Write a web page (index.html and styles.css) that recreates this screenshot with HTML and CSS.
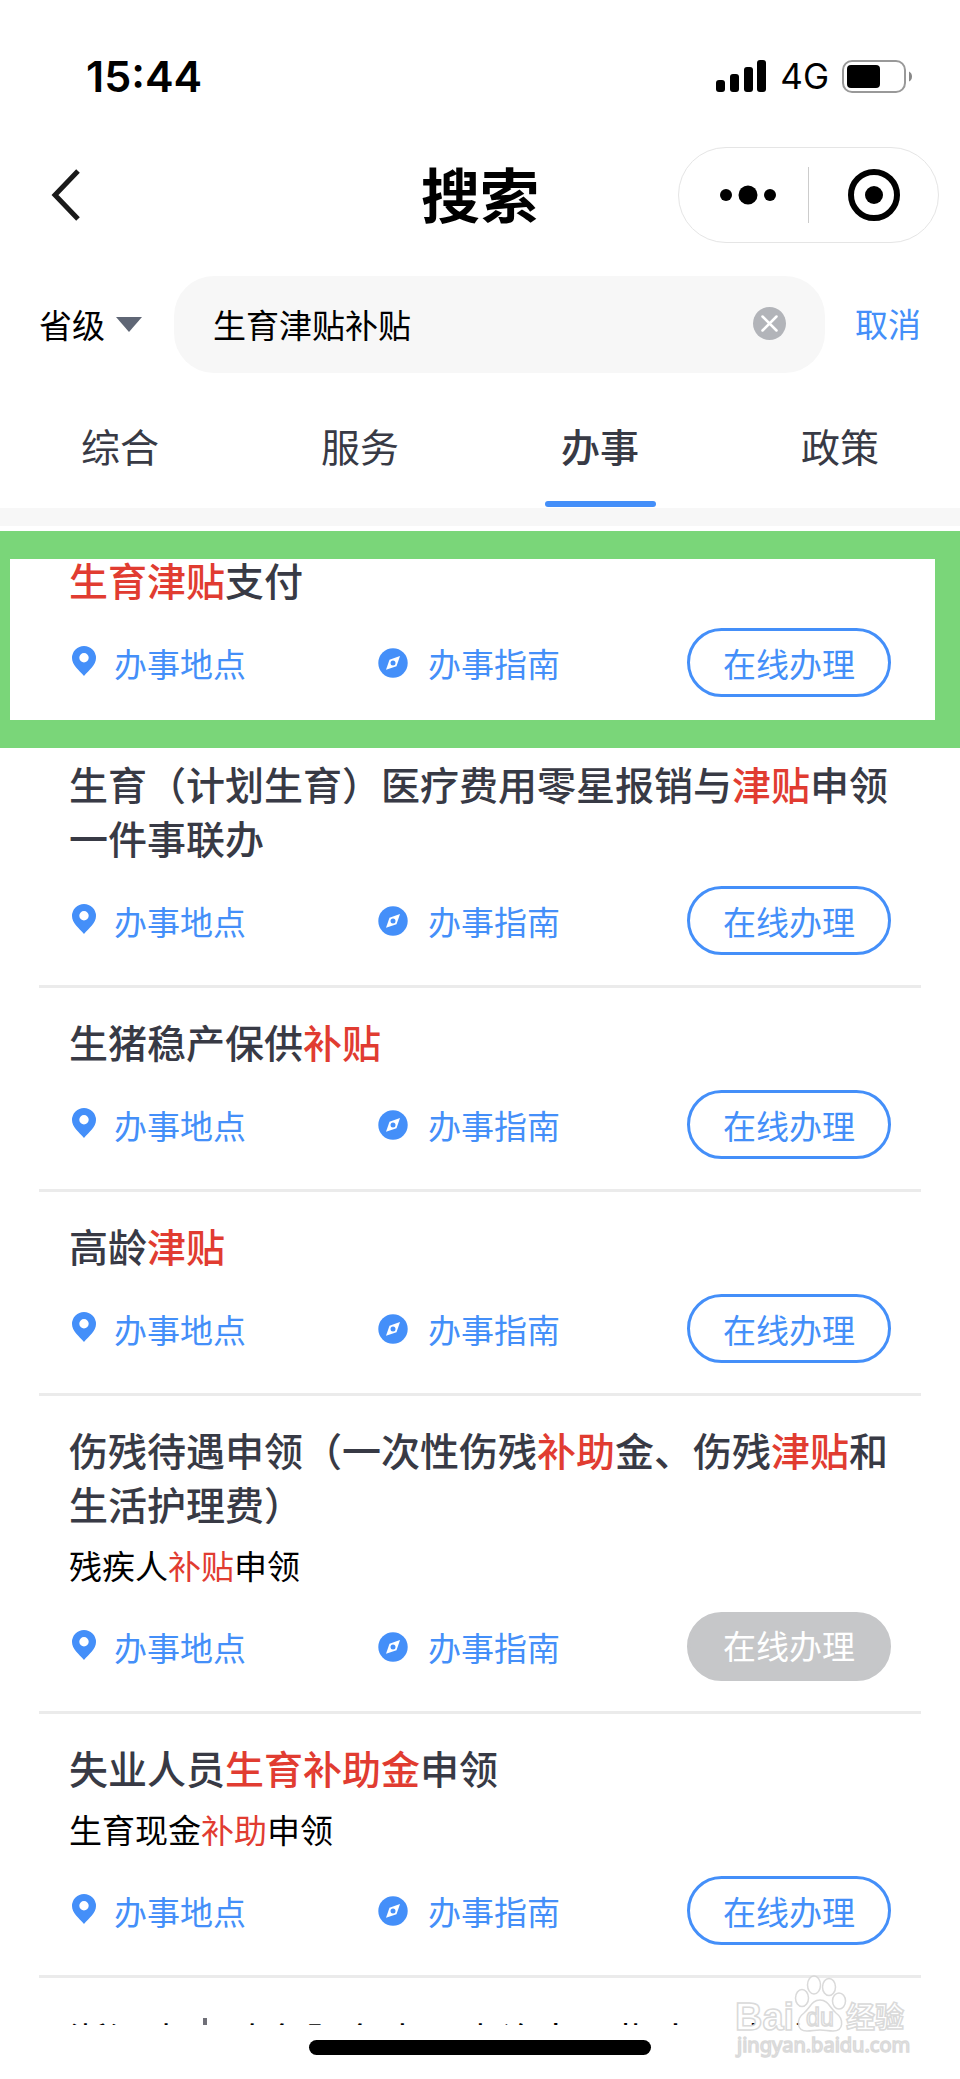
FILE: index.html
```html
<!DOCTYPE html>
<html lang="zh-CN">
<head>
<meta charset="utf-8">
<meta name="viewport" content="width=device-width, initial-scale=1">
<title>搜索</title>
<link rel="stylesheet" href="styles.css">
</head>
<body>
<svg class="sprite" aria-hidden="true">
  <symbol id="pin" viewBox="0 0 24 30"><path fill-rule="evenodd" d="M12 0a12 12 0 0 1 12 12c0 7-7 12-12 18C7 24 0 19 0 12A12 12 0 0 1 12 0zm0 7a4.700 4.700 0 1 0 0 9.400A4.700 4.700 0 0 0 12 7z"/></symbol>
  <symbol id="compass" viewBox="0 0 30 30"><circle cx="15" cy="15" r="14.700"/><path fill="#fff" d="M22 8l-10.500 3.700L8 21.800l10.500-3.500z"/><circle cx="15" cy="15" r="2.500"/></symbol>
</svg>
<div class="app">
  <div class="status">
    <span class="time">15:44</span>
    <div class="signals">
      <svg width="51" height="33" viewBox="0 0 51 33" aria-hidden="true"><rect x="0" y="20" width="9" height="12" rx="3"/><rect x="14" y="14" width="9" height="18" rx="3"/><rect x="28" y="7" width="9" height="25" rx="3"/><rect x="41" y="0" width="9" height="32" rx="3"/></svg>
      <span class="network">4G</span>
      <svg width="71" height="33" viewBox="0 0 71 33" aria-hidden="true"><rect x="1" y="1" width="62" height="31" rx="9" fill="none" stroke="#999" stroke-width="2"/><rect x="5" y="5" width="33" height="23" rx="4"/><path d="M67 11.500q3 1.500 3 5t-3 5z" fill="#888"/></svg>
    </div>
  </div>

  <header class="nav">
    <button class="back" aria-label="返回"><svg width="30" height="54" viewBox="0 0 30 54"><path d="M27 3L4 27l23 24" fill="none" stroke="#1a1a1a" stroke-width="5"/></svg></button>
    <h1 class="title">搜索</h1>
    <div class="capsule">
      <button class="capsule-btn more" aria-label="更多"><svg width="58" height="20" viewBox="0 0 58 20"><circle cx="7" cy="10" r="6"/><circle cx="29" cy="10" r="9.500"/><circle cx="51" cy="10" r="6"/></svg></button>
      <button class="capsule-btn" aria-label="关闭"><svg width="52" height="52" viewBox="0 0 52 52"><circle cx="26" cy="26" r="23" fill="none" stroke="#000" stroke-width="6"/><circle cx="26" cy="26" r="9"/></svg></button>
    </div>
  </header>

  <form class="search">
    <div class="region">
      <select class="region-select" aria-label="区域"><option>省级</option></select>
      <svg class="caret" width="26" height="15" viewBox="0 0 26 15" aria-hidden="true"><path d="M0 0h26L13 15z" fill="#5f6675"/></svg>
    </div>
    <div class="field">
      <input class="query" type="text" value="生育津贴补贴" aria-label="搜索内容">
      <button class="clear" type="button" aria-label="清除"><svg width="33" height="33" viewBox="0 0 33 33"><circle cx="16.500" cy="16.500" r="16.500" fill="#b2b4b9"/><path d="M9.500 9.500l14 14m0-14l-14 14" stroke="#fff" stroke-width="2.500" stroke-linecap="round"/></svg></button>
    </div>
    <button class="cancel" type="button">取消</button>
  </form>

  <nav class="tabs">
    <a class="tab" href="#">综合</a>
    <a class="tab" href="#">服务</a>
    <a class="tab active" href="#" aria-current="page">办事</a>
    <a class="tab" href="#">政策</a>
  </nav>

  <ul class="results">
    <li class="item marked"><div class="card">
      <h2 class="name"><em>生育津贴</em>支付</h2>
      <div class="actions"><a class="link" href="#"><svg class="pin"><use href="#pin"/></svg>办事地点</a><a class="link" href="#"><svg class="compass"><use href="#compass"/></svg>办事指南</a><button class="apply">在线办理</button></div>
    </div></li>
    <li class="item"><div class="card">
      <h2 class="name">生育（计划生育）医疗费用零星报销与<em>津贴</em>申领一件事联办</h2>
      <div class="actions"><a class="link" href="#"><svg class="pin"><use href="#pin"/></svg>办事地点</a><a class="link" href="#"><svg class="compass"><use href="#compass"/></svg>办事指南</a><button class="apply">在线办理</button></div>
    </div></li>
    <li class="item"><div class="card">
      <h2 class="name">生猪稳产保供<em>补贴</em></h2>
      <div class="actions"><a class="link" href="#"><svg class="pin"><use href="#pin"/></svg>办事地点</a><a class="link" href="#"><svg class="compass"><use href="#compass"/></svg>办事指南</a><button class="apply">在线办理</button></div>
    </div></li>
    <li class="item"><div class="card">
      <h2 class="name">高龄<em>津贴</em></h2>
      <div class="actions"><a class="link" href="#"><svg class="pin"><use href="#pin"/></svg>办事地点</a><a class="link" href="#"><svg class="compass"><use href="#compass"/></svg>办事指南</a><button class="apply">在线办理</button></div>
    </div></li>
    <li class="item"><div class="card">
      <h2 class="name">伤残待遇申领（一次性伤残<em>补助</em>金、伤残<em>津贴</em>和生活护理费）</h2>
      <p class="sub">残疾人<em>补贴</em>申领</p>
      <div class="actions"><a class="link" href="#"><svg class="pin"><use href="#pin"/></svg>办事地点</a><a class="link" href="#"><svg class="compass"><use href="#compass"/></svg>办事指南</a><button class="apply" disabled>在线办理</button></div>
    </div></li>
    <li class="item"><div class="card">
      <h2 class="name">失业人员<em>生育补助金</em>申领</h2>
      <p class="sub">生育现金<em>补助</em>申领</p>
      <div class="actions"><a class="link" href="#"><svg class="pin"><use href="#pin"/></svg>办事地点</a><a class="link" href="#"><svg class="compass"><use href="#compass"/></svg>办事指南</a><button class="apply">在线办理</button></div>
    </div></li>
    <li class="item"><p class="source">浙江省<span class="bar"></span>政务服务事项查询办理指南及申请</p></li>
  </ul>

  <footer class="home"><span class="home-bar"></span></footer>

  <svg class="watermark" width="180" height="90" viewBox="0 0 180 90">
    <g fill="#fff" stroke="#d6d6d6" stroke-width="1.500">
      <text class="wm-latin" x="1" y="56">Bai</text>
      <path d="M86 26c8 0 10 8 16 13 8 6 8 18-3 18-5 0-8-1-13-1s-8 1-13 1c-11 0-11-12-3-18 6-5 8-13 16-13z"/>
      <ellipse cx="68" cy="24" rx="6.500" ry="8.500"/><ellipse cx="80" cy="11" rx="6.500" ry="9"/><ellipse cx="95" cy="13" rx="6.500" ry="8.500"/><ellipse cx="105" cy="27" rx="6.500" ry="8"/>
      <text class="wm-du" x="72" y="52">du</text>
      <text class="wm-cjk" x="112" y="54">经验</text>
      <text class="wm-url" x="3" y="78">jingyan.baidu.com</text>
    </g>
  </svg>
</div>
</body>
</html>
```
FILE: styles.css
```css
*, *::before, *::after { box-sizing: border-box; }

body {
  margin: 0;
  background: #fff;
  color: #000;
  font-family: "Noto Sans CJK SC", sans-serif;
}

button, input, select {
  margin: 0;
  padding: 0;
  border: 0;
  background: none;
  color: inherit;
  font: inherit;
}

svg { display: block; flex: none; }
em { color: #e13c31; font-style: normal; }
a { color: inherit; text-decoration: none; }

.sprite { position: absolute; width: 0; height: 0; }

.app {
  position: relative;
  display: flex;
  flex-direction: column;
  height: 100vh;
}

/* Status bar */
.status {
  display: flex;
  align-items: flex-end;
  justify-content: space-between;
  height: 102px;
  padding: 0 47px 0 86px;
  font-family: Inter, sans-serif;
}
.time { font-size: 43px; font-weight: 600; line-height: 52px; }
.signals { display: flex; align-items: center; gap: 13px; height: 52px; }
.network { font-size: 35px; line-height: 52px; }

/* Title bar */
.nav {
  display: grid;
  grid-template-columns: 1fr auto 1fr;
  align-items: center;
  height: 141px;
  padding: 45px 21px 0;
  margin-bottom: 33px;
}
.back { justify-self: start; margin-left: 30px; }
.title {
  margin: 0;
  padding-bottom: 4px;
  font-size: 59px;
  font-weight: 700;
  line-height: 84px;
}
.capsule {
  display: flex;
  justify-self: end;
  align-items: center;
  width: 261px;
  height: 96px;
  border: 1px solid #e5e5e5;
  border-radius: 48px;
}
.capsule-btn {
  display: flex;
  flex: 1;
  align-items: center;
  justify-content: center;
  height: 56px;
}
.more { flex: none; width: 130px; border-right: 1px solid #ccc; padding-left: 8px; }

/* Search */
.search {
  display: flex;
  align-items: center;
  gap: 30px;
  padding: 0 39px;
  font-size: 33px;
}
.region { display: flex; align-items: center; gap: 11px; width: 105px; }
.region-select { width: 66px; height: 50px; padding-bottom: 2px; appearance: none; overflow: visible; }
.field {
  display: flex;
  flex: 1;
  align-items: center;
  height: 97px;
  padding: 0 39px 2px;
  border-radius: 40px;
  background: #f7f7f7;
}
.query { flex: 1; min-width: 0; height: 60px; outline: 0; }
.cancel { padding-bottom: 4px; color: #448ff9; line-height: 50px; }

/* Tabs */
.tabs {
  display: flex;
  height: 153px;
  border-bottom: 18px solid #f7f7f7;
  color: #383a45;
  font-size: 39px;
}
.tab {
  display: flex;
  flex: 1;
  flex-direction: column;
  align-items: center;
  padding-top: 42px;
  line-height: 60px;
}
.active { font-weight: 500; }
.active::after {
  content: "";
  width: 111px;
  height: 6px;
  margin-top: 26px;
  border-radius: 3px;
  background: #448ff9;
}

/* Results */
.results {
  flex: 1;
  min-height: 0;
  margin: 0;
  padding: 0;
  overflow-y: auto;
  scrollbar-width: none;
  list-style: none;
}
.item { position: relative; padding: 0 39px; }
.card { padding: 26px 30px 30px; border-bottom: 3px solid #ebebeb; }
.marked .card { border-color: transparent; }
.marked::after {
  content: "";
  position: absolute;
  z-index: 1;
  top: 5px;
  right: 0;
  left: 0;
  height: 217px;
  border: solid #7ad679;
  border-width: 28px 25px 28px 10px;
  pointer-events: none;
}
.name {
  margin: 0;
  color: #383a45;
  font-size: 39px;
  font-weight: 500;
  line-height: 54px;
}
.sub { margin: 10px 0 0; font-size: 33px; line-height: 50px; }
.actions {
  display: grid;
  grid-template-columns: 1fr 1fr 204px;
  align-items: center;
  margin-top: 22px;
}
.link {
  display: flex;
  align-items: center;
  color: #448ff9;
  font-size: 33px;
  line-height: 50px;
}
.pin { width: 24px; height: 30px; margin: 0 18px 4px 3px; fill: #448ff9; }
.compass { width: 30px; height: 30px; margin-right: 20px; fill: #448ff9; }
.apply {
  height: 69px;
  border: 3px solid #448ff9;
  border-radius: 35px;
  color: #448ff9;
  font-size: 33px;
  line-height: 50px;
}
.apply:disabled { padding-bottom: 4px; border-color: #c6c7c9; background: #c6c7c9; color: #fff; }
.source {
  display: flex;
  align-items: center;
  margin: 0;
  padding: 34px 30px 0;
  font-size: 39px;
  line-height: 54px;
  white-space: nowrap;
}
.bar { width: 4px; height: 42px; margin: 0 20px 0 17px; background: #707078; }

/* Home indicator */
.home { display: flex; justify-content: center; height: 54px; padding-top: 15px; }
.home-bar { width: 342px; height: 15px; border-radius: 8px; background: #000; }

.watermark { position: absolute; right: 46px; bottom: 15px; opacity: 0.9; }
.wm-latin { font: 700 38px "Liberation Sans", sans-serif; }
.wm-du { font: 400 25px "Liberation Sans", sans-serif; }
.wm-cjk { font: 700 29px "Noto Sans CJK SC", sans-serif; }
.wm-url { font: 400 20px "Noto Sans", sans-serif; }
```
